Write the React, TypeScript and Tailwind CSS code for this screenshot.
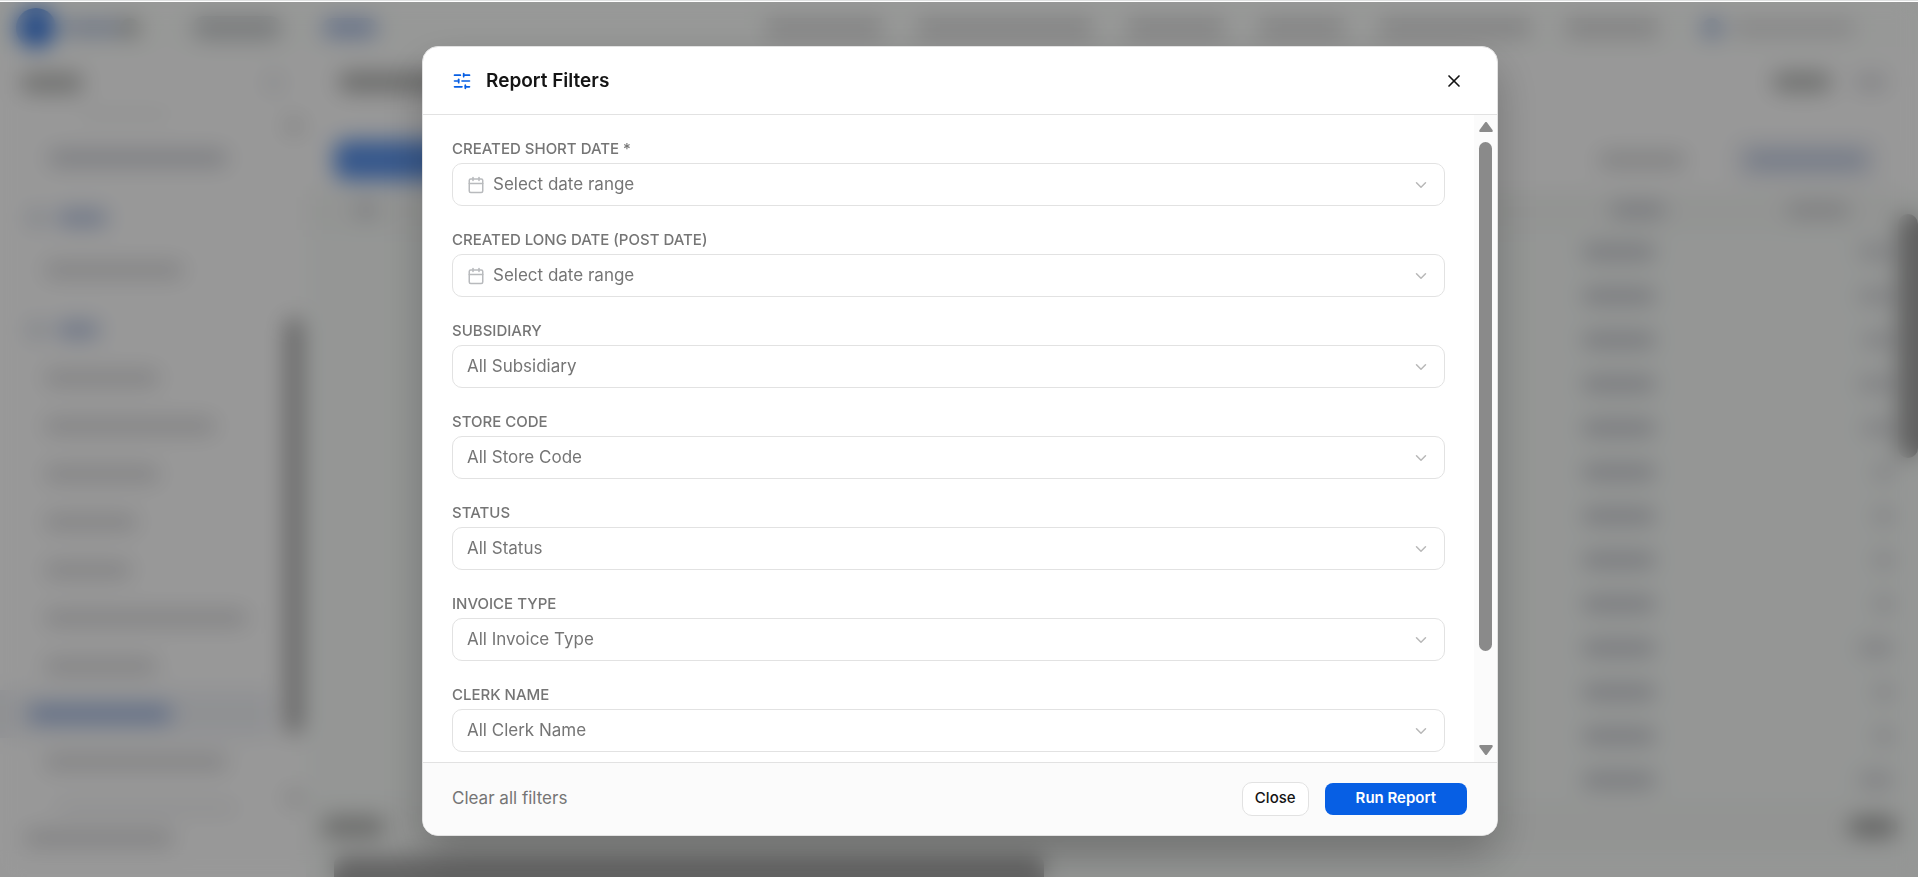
import { Calendar, ChevronDown, SlidersHorizontal, X } from "lucide-react";

type Field = { id: string; label: string; value: string; date?: boolean };

const fields: Field[] = [
  { id: "short-date", label: "Created Short Date *", value: "Select date range", date: true },
  { id: "long-date", label: "Created Long Date (Post Date)", value: "Select date range", date: true },
  { id: "subsidiary", label: "Subsidiary", value: "All Subsidiary" },
  { id: "store", label: "Store Code", value: "All Store Code" },
  { id: "status", label: "Status", value: "All Status" },
  { id: "invoice", label: "Invoice Type", value: "All Invoice Type" },
  { id: "clerk", label: "Clerk Name", value: "All Clerk Name" },
];

const navItems = ["w-[116px]", "w-[174px]", "w-[96px]", "w-[84px]", "w-[150px]", "w-[92px]"];
const sideItems = ["w-[116px]", "w-[172px]", "w-[116px]", "w-[94px]", "w-[88px]", "w-[204px]", "w-[114px]"];
const amounts = ["w-9", "w-9", "w-8", "w-9", "w-8", "w-5", "w-5", "w-5", "w-5", "w-9", "w-5", "w-5", "w-9"];

function SideRow({ size }: { size: string }) {
  return (
    <div className="flex h-12 shrink-0 items-center pl-11">
      <div className={`h-4 rounded-full bg-[#dadadc] ${size}`} />
    </div>
  );
}

function SideHeading({ size }: { size: string }) {
  return (
    <div className="flex h-[60px] shrink-0 items-center gap-3 pl-7">
      <div className="size-4 rounded-full bg-[#c6cedd]" />
      <div className={`h-4 rounded-full bg-[#b4c2e0] ${size}`} />
    </div>
  );
}

function Backdrop() {
  return (
    <div aria-hidden="true" className="flex h-full flex-col overflow-hidden bg-[#fefefe]">
      <div className="flex h-[52px] shrink-0 items-center bg-[#fcfefc] pl-4">
        <div className="size-10 rounded-full bg-[#3f7de0]" />
        <div className="ml-2 h-4 w-14 bg-[#b9c6de]" />
        <div className="size-5 rounded-full bg-[#b6b7b4]" />
        <div className="ml-[52px] h-6 w-[90px] rounded-full bg-[#cccfd1]" />
        <div className="ml-10 h-5 w-14 rounded-full bg-[#aabde3]" />
        <div className="mr-16 ml-auto flex items-center gap-9">
          {navItems.map((size, i) => (
            <div key={i} className={`h-5 bg-[#dadadb] ${size}`} />
          ))}
          <div className="ml-2 flex items-center gap-3">
            <div className="size-5 rounded-full bg-[#9bb0da]" />
            <div className="h-4 w-[120px] bg-[#dfdfe0]" />
          </div>
        </div>
      </div>
      <div className="flex min-h-0 flex-1">
        <div className="flex w-[306px] shrink-0">
          <div className="flex min-w-0 flex-1 flex-col">
            <div className="flex h-[58px] shrink-0 items-center justify-between pl-5">
              <div className="h-5 w-[64px] rounded-full bg-[#babbb9]" />
              <div className="size-4 rounded-full bg-[#dcdee3]" />
            </div>
            <div className="flex h-4 shrink-0 pl-20">
              <div className="h-1 w-[90px] bg-[#e6e8e7]" />
            </div>
            <div className="flex h-[60px] shrink-0 items-center pl-12">
              <div className="h-4 w-[180px] rounded-full bg-[#cfd1d7]" />
            </div>
            <SideHeading size="w-[52px]" />
            <div className="flex h-11 shrink-0 items-center pl-11">
              <div className="h-4 w-[140px] rounded-full bg-[#dadadc]" />
            </div>
            <div className="h-2 shrink-0" />
            <SideHeading size="w-[44px]" />
            <div className="-mt-1.5 flex flex-col">
              {sideItems.map((size, i) => (
                <SideRow key={i} size={size} />
              ))}
            </div>
            <div className="flex h-12 w-[272px] shrink-0 items-center bg-[#f0f2f6] pl-7">
              <div className="h-4 w-[144px] rounded-full bg-[#98b0de]" />
            </div>
            <SideRow size="w-[184px]" />
            <div className="mt-5 ml-14 h-1 w-[180px] shrink-0 bg-[#cfd0d6]" />
            <div className="mt-5 ml-6 h-4 w-[150px] shrink-0 rounded-full bg-[#d8d8da]" />
          </div>
          <div className="flex w-6 flex-col items-center pt-16">
            <div className="size-4 rounded-full bg-[#cfcfcf]" />
            <div className="mt-[184px] h-[416px] w-4 shrink-0 rounded-full bg-[#a0a0a0]" />
            <div className="mt-[56px] size-4 shrink-0 rounded-full bg-[#d2d2d2]" />
          </div>
        </div>
        <div className="flex min-w-0 flex-1 flex-col bg-[#f8fbf9]">
          <div className="flex h-[72px] shrink-0 items-center justify-between bg-[#fefefe] px-8 pb-4">
            <div className="h-5 w-[140px] rounded-full bg-[#b0b1af]" />
            <div className="flex items-center gap-6">
              <div className="h-5 w-[60px] rounded-full bg-[#b9bbb9]" />
              <div className="h-4 w-[30px] bg-[#dadbdf]" />
            </div>
          </div>
          <div className="flex h-16 shrink-0 items-center justify-between bg-[#fefefe] pt-1 pr-10 pl-7">
            <div className="h-10 w-[240px] rounded-xl bg-[#5a92ea]" />
            <div className="flex items-center gap-12">
              <div className="h-4 w-[88px] rounded-full bg-[#d6d7d8]" />
              <div className="flex h-10 w-[144px] items-center justify-center rounded-lg bg-[#eceef3]">
                <div className="h-4 w-[120px] rounded-full bg-[#becae2]" />
              </div>
            </div>
          </div>
          <div className="flex min-h-0 flex-1">
            <div className="flex min-w-0 flex-1 flex-col">
              <div className="flex h-10 shrink-0 items-center bg-[#f5f7f5] pl-12">
                <div className="h-4 w-6 rounded-full bg-[#cfd1d6]" />
                <div className="ml-auto h-4 w-14 rounded-full bg-[#cbcdd3]" />
                <div className="mr-12 ml-[120px] h-4 w-16 rounded-full bg-[#d2d3d6]" />
              </div>
              {amounts.map((size, i) => (
                <div key={i} className="flex h-11 shrink-0 items-center justify-end pr-1">
                  <div className="mr-[202px] h-4 w-[74px] rounded-full bg-[#c8cad0]" />
                  <div className="flex w-9 justify-end">
                    <div className={`h-4 rounded-full bg-[#d5d6da] ${size}`} />
                  </div>
                </div>
              ))}
              <div className="flex h-[50px] shrink-0 items-center justify-between bg-[#f5f7f5] pl-4">
                <div className="h-5 w-[64px] rounded-full bg-[#b0b1af]" />
                <div className="h-5 w-[50px] rounded-full bg-[#a3a4a3]" />
              </div>
              <div className="mt-1 ml-7 h-8 w-[710px] shrink-0 rounded-lg bg-[#a6a6a6]" />
            </div>
            <div className="w-5 shrink-0 pt-6">
              <div className="h-[244px] w-full rounded-full bg-[#a0a0a0]" />
            </div>
          </div>
        </div>
      </div>
    </div>
  );
}

function FilterField({ field }: { field: Field }) {
  return (
    <div className="flex flex-col gap-1">
      <label htmlFor={field.id} className="text-[15px] leading-5 font-medium text-[#757575] uppercase">
        {field.label}
      </label>
      <button
        id={field.id}
        type="button"
        className="flex h-[43px] w-full items-center rounded-[10px] border border-[#e2e2e2] bg-white px-[14px] text-left text-[17px] text-[#757575]"
      >
        {field.date && <Calendar className="mr-2 size-[18px] text-[#b8babd]" />}
        <span className="flex-1">{field.value}</span>
        <ChevronDown className="size-[18px] text-[#b8b8b8]" />
      </button>
    </div>
  );
}

function ScrollTrack() {
  return (
    <div aria-hidden="true" className="flex w-[23px] shrink-0 flex-col items-center bg-[#fbfbfb] py-[7px]">
      <svg viewBox="0 0 14 10" className="h-[10px] w-[14px] shrink-0" fill="#8a8a8a">
        <path d="M5.8.7a1.5 1.5 0 0 1 2.4 0l5.3 7.4c.5.8.2 1.9-1 1.9h-11C.3 10 0 8.9.5 8.1z" />
      </svg>
      <div className="mt-[10px] min-h-0 w-[13px] flex-[508] rounded-full bg-[#8a8a8a]" />
      <div className="min-h-0 flex-[94]" />
      <svg viewBox="0 0 14 10" className="h-[10px] w-[14px] shrink-0" fill="#8a8a8a">
        <path d="M5.8 9.3a1.5 1.5 0 0 0 2.4 0l5.3-7.4C14 1.1 13.7 0 12.5 0h-11C.3 0 0 1.1.5 1.9z" />
      </svg>
    </div>
  );
}

export default function App() {
  return (
    <div className="relative h-screen overflow-hidden border-t border-[#dfe1e1] bg-white pt-px font-['Inter',sans-serif]">
      <Backdrop />
      <div className="absolute inset-x-0 top-px bottom-0 flex items-center justify-center bg-black/40 pt-[3px] pl-0.5 backdrop-blur-[11px]">
        <section
          role="dialog"
          aria-modal="true"
          aria-labelledby="dialog-title"
          className="flex h-[90vh] w-[1076px] max-w-[95vw] flex-col overflow-hidden rounded-2xl border border-[#e2e2e2] bg-white shadow-[0_20px_44px_rgba(0,0,0,0.24)]"
        >
          <header className="flex h-[68px] shrink-0 items-center border-b border-[#e2e2e2] px-[29px]">
            <SlidersHorizontal className="size-5 text-[#075fe4]" />
            <h2 id="dialog-title" className="ml-3.5 text-[19px] font-semibold text-[#141414]">
              Report Filters
            </h2>
            <button type="button" aria-label="Close dialog" className="ml-auto p-1 text-[#141414]">
              <X className="size-5" />
            </button>
          </header>
          <div className="flex min-h-0 flex-1">
            <div className="flex min-w-0 flex-1 flex-col gap-6 overflow-hidden px-[29px] pt-6">
              {fields.map((field) => (
                <FilterField key={field.id} field={field} />
              ))}
            </div>
            <ScrollTrack />
          </div>
          <footer className="flex h-[73px] shrink-0 items-center border-t border-[#e2e2e2] bg-[#fbfbfb] pr-[30px] pl-[29px]">
            <button type="button" className="text-[17px] text-[#757575]">
              Clear all filters
            </button>
            <button
              type="button"
              className="ml-auto h-[34px] rounded-[10px] border border-[#e2e2e2] bg-white px-3 text-[15px] font-medium text-[#141414]"
            >
              Close
            </button>
            <button
              type="button"
              className="ml-4 h-8 rounded-lg bg-[#075fe4] px-[31px] text-[15px] font-semibold text-white"
            >
              Run Report
            </button>
          </footer>
        </section>
      </div>
    </div>
  );
}
